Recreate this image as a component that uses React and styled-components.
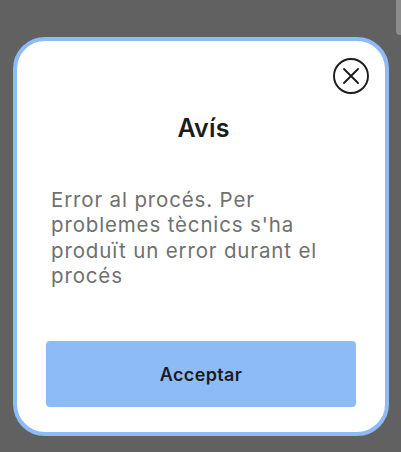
import React from "react";
import styled, { createGlobalStyle } from "styled-components";

const GlobalStyle = createGlobalStyle`
  html, body {
    margin: 0;
    padding: 0;
    background: #616161;
  }
`;

function CloseIcon() {
  return (
    <svg width="38" height="38" viewBox="0 0 38 38" fill="none" stroke="#1c1c1c" strokeLinecap="round">
      <circle cx="19" cy="19" r="17" strokeWidth="1.9" />
      <path d="M12 12 L26 26 M26 12 L12 26" strokeWidth="1.9" />
    </svg>
  );
}

export default function App() {
  return (
    <>
      <GlobalStyle />
      <Overlay>
        <ScrollThumb />
        <Modal>
          <CloseRow>
            <CloseButton aria-label="Tancar">
              <CloseIcon />
            </CloseButton>
          </CloseRow>
          <Title>Avís</Title>
          <Message>Error al procés. Per problemes tècnics s'ha produït un error durant el procés</Message>
          <AcceptButton>Acceptar</AcceptButton>
        </Modal>
      </Overlay>
    </>
  );
}

const Overlay = styled.div`
  position: relative;
  width: 401px;
  height: 452px;
  box-sizing: border-box;
  padding: 37px 12px 16px 13px;
  background: #616161;
  overflow: hidden;
`;

const ScrollThumb = styled.div`
  position: absolute;
  top: 0;
  right: 0;
  width: 5px;
  height: 35px;
  background: #8c8c8c;
  border-bottom-left-radius: 4px;
`;

const Modal = styled.div`
  box-sizing: border-box;
  height: 399px;
  padding: 16px 29px 25px 29px;
  display: flex;
  flex-direction: column;
  background: #fff;
  border: 4px solid #8dbbf8;
  border-radius: 32px;
  font-family: "Inter", "Liberation Sans", sans-serif;
`;

const CloseRow = styled.div`
  display: flex;
  justify-content: flex-end;
  margin-right: -14px;
`;

const CloseButton = styled.button`
  width: 38px;
  height: 38px;
  padding: 0;
  border: none;
  background: none;
  display: block;
`;

const Title = styled.h2`
  margin: 18px 0 0;
  padding-left: 5px;
  text-align: center;
  font-size: 25px;
  line-height: 30px;
  font-weight: 600;
  letter-spacing: 0.2px;
  color: #1c1c1c;
`;

const Message = styled.p`
  margin: 44px 0 0;
  padding: 0 30px 0 5px;
  font-size: 20.5px;
  line-height: 25.3px;
  font-weight: 400;
  letter-spacing: 0.85px;
  color: #707070;
`;

const AcceptButton = styled.button`
  margin-top: auto;
  height: 66px;
  border: none;
  border-radius: 4px;
  background: #8dbbf8;
  font-family: inherit;
  font-size: 18px;
  font-weight: 600;
  letter-spacing: 0.35px;
  color: #1c1c1c;
`;
